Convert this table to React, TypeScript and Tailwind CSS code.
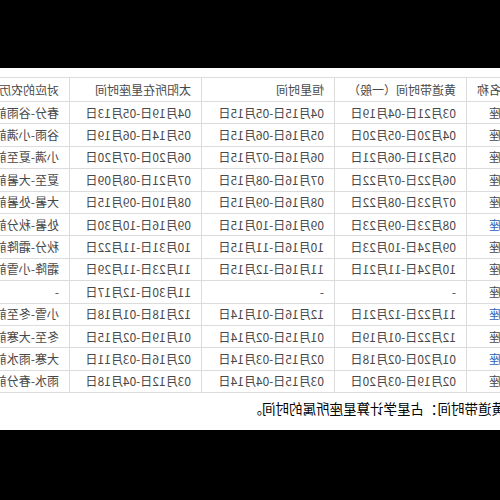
const rows: { name: string; link?: boolean; zodiac: string; sidereal: string; sun: string; term: string }[] = [
  { name: "白羊座", zodiac: "03月21日-04月19日", sidereal: "04月15日-05月15日", sun: "04月19日-05月13日", term: "春分-谷雨前" },
  { name: "金牛座", zodiac: "04月20日-05月20日", sidereal: "05月16日-06月15日", sun: "05月14日-06月19日", term: "谷雨-小满前" },
  { name: "双子座", zodiac: "05月21日-06月21日", sidereal: "06月16日-07月15日", sun: "06月20日-07月20日", term: "小满-夏至前" },
  { name: "巨蟹座", zodiac: "06月22日-07月22日", sidereal: "07月16日-08月15日", sun: "07月21日-08月09日", term: "夏至-大暑前" },
  { name: "狮子座", zodiac: "07月23日-08月22日", sidereal: "08月16日-09月15日", sun: "08月10日-09月15日", term: "大暑-处暑前" },
  { name: "处女座", link: true, zodiac: "08月23日-09月23日", sidereal: "09月16日-10月15日", sun: "09月16日-10月30日", term: "处暑-秋分前" },
  { name: "天秤座", zodiac: "09月24日-10月23日", sidereal: "10月16日-11月15日", sun: "10月31日-11月22日", term: "秋分-霜降前" },
  { name: "天蝎座", zodiac: "10月24日-11月21日", sidereal: "11月16日-12月15日", sun: "11月23日-11月29日", term: "霜降-小雪前" },
  { name: "蛇夫座", zodiac: "-", sidereal: "-", sun: "11月30日-12月17日", term: "-" },
  { name: "射手座", link: true, zodiac: "11月22日-12月21日", sidereal: "12月16日-01月14日", sun: "12月18日-01月18日", term: "小雪-冬至前" },
  { name: "摩羯座", zodiac: "12月22日-01月19日", sidereal: "01月15日-02月14日", sun: "01月19日-02月15日", term: "冬至-大寒前" },
  { name: "水瓶座", link: true, zodiac: "01月20日-02月18日", sidereal: "02月15日-03月14日", sun: "02月16日-03月11日", term: "大寒-雨水前" },
  { name: "双鱼座", zodiac: "02月19日-03月20日", sidereal: "03月15日-04月14日", sun: "03月12日-04月18日", term: "雨水-春分前" },
]

const cell = "border border-[#dcdcdc] px-[10px] py-0 text-left whitespace-nowrap leading-none"

export default function App() {
  return (
    <div className="w-[500px] h-[500px] bg-black flex flex-col overflow-hidden">
      <div className="h-[68px] shrink-0" />
      {/* the screenshot is mirrored, so the page is flipped as a whole */}
      <div className="h-[362px] shrink-0 bg-white overflow-hidden -scale-x-100 font-['Noto_Sans_CJK_SC','Noto_Sans',sans-serif]">
        <div className="pt-[9px] -ml-[36px]">
          <table className="table-fixed border-collapse text-[12px] text-[#484848] w-[666px]">
            <colgroup>
              <col className="w-[69px]" />
              <col className="w-[132px]" />
              <col className="w-[133px]" />
              <col className="w-[132px]" />
              <col className="w-[200px]" />
            </colgroup>
            <thead>
              <tr className="h-[24px]">
                <th className={`${cell} font-normal`}>星座名称</th>
                <th className={`${cell} font-normal`}>黄道带时间（一般）</th>
                <th className={`${cell} font-normal`}>恒星时间</th>
                <th className={`${cell} font-normal`}>太阳所在星座时间</th>
                <th className={`${cell} font-normal`}>对应的农历节气</th>
              </tr>
            </thead>
            <tbody>
              {rows.map((r) => (
                <tr key={r.name} className="h-[22.4px]">
                  <td className={`${cell} ${r.link ? "text-[#2b63b8]" : ""}`}>{r.name}</td>
                  <td className={cell}>{r.zodiac}</td>
                  <td className={cell}>{r.sidereal}</td>
                  <td className={cell}>{r.sun}</td>
                  <td className={cell}>{r.term}</td>
                </tr>
              ))}
            </tbody>
          </table>
          <p className="mt-[9px] ml-[31px] text-[13.5px] leading-none text-black whitespace-nowrap">
            <span className="-ml-[27px]">注：</span>黄道带时间：占星学计算星座所属的时间。
          </p>
        </div>
      </div>
      <div className="flex-1" />
    </div>
  )
}
